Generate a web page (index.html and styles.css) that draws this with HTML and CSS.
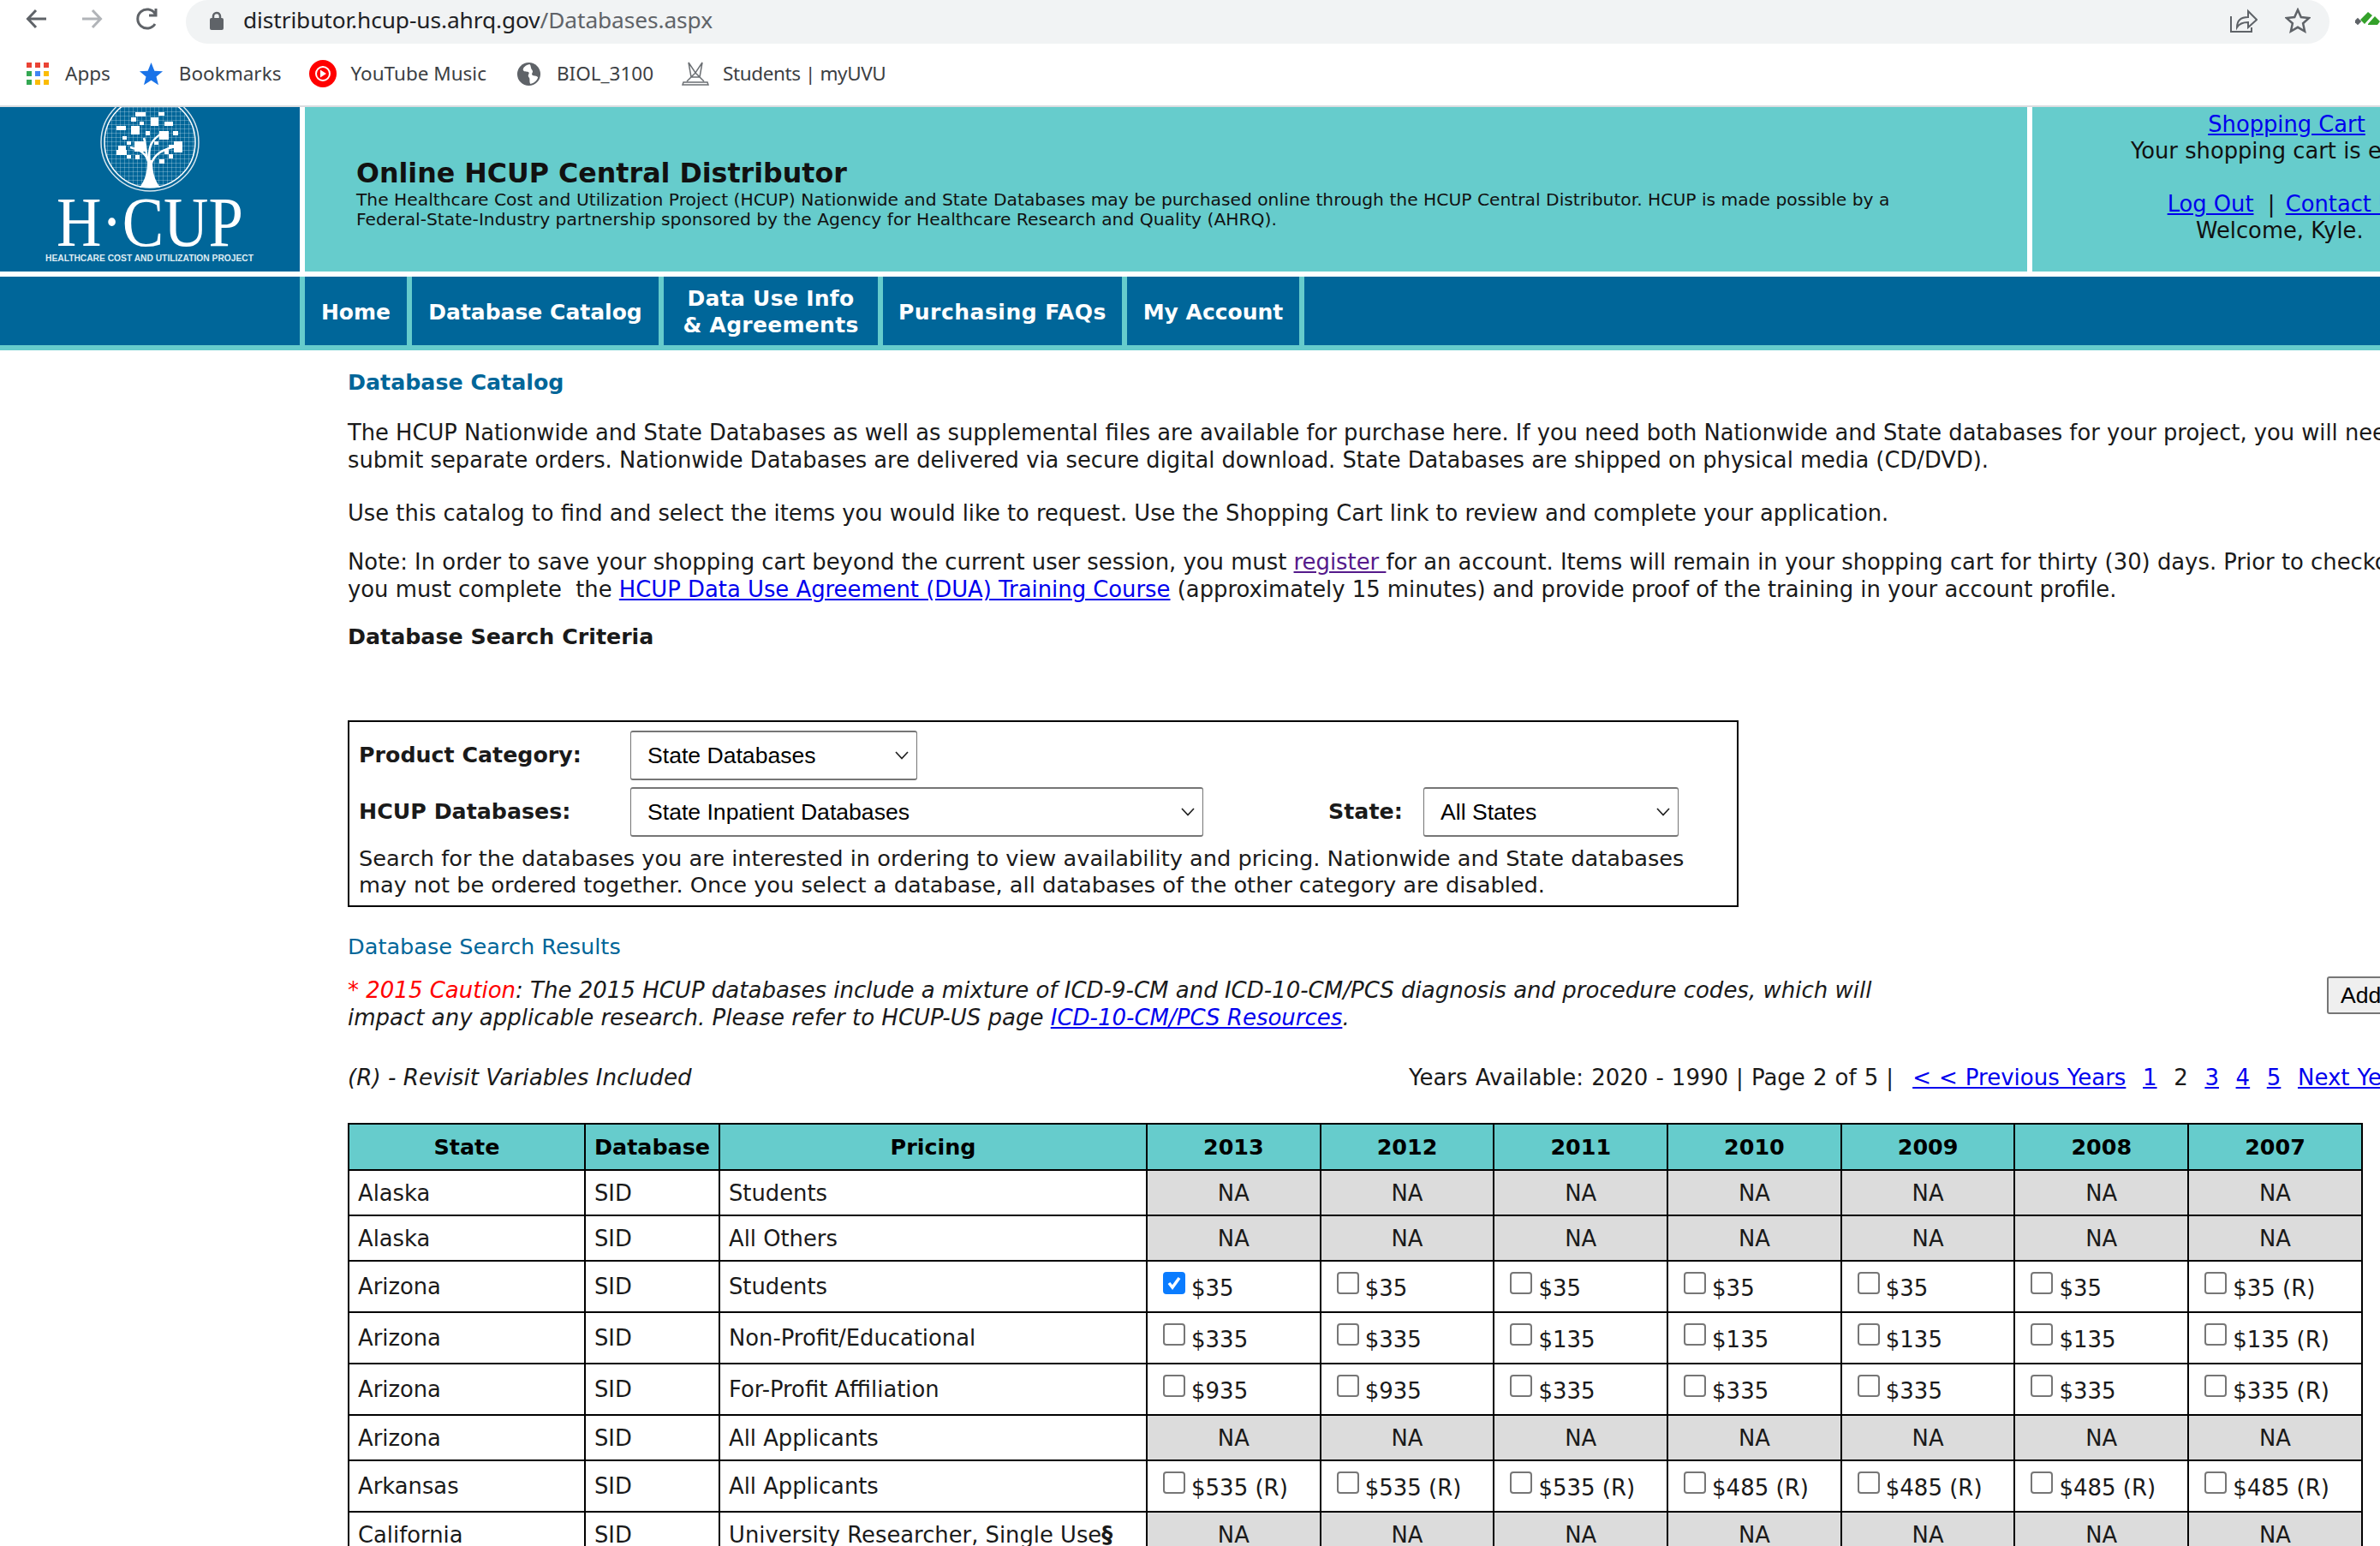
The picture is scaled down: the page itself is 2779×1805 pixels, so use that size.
FILE: index.html
```html
<!DOCTYPE html>
<html lang="en">
<head>
<meta charset="utf-8">
<title>Online HCUP Central Distributor</title>
<link rel="stylesheet" href="styles.css">
</head>
<body>
<div class="chrome">
  <div class="toolbar">
    <div class="navbtns">
      <svg class="ic back" viewBox="0 0 26 26"><path d="M24 13H3M12 3 2.500 13 12 23" /></svg>
      <svg class="ic fwd" viewBox="0 0 26 26"><path d="M2 13h21M14 3l9.500 10L14 23" /></svg>
      <svg class="ic reload" viewBox="0 0 28 26"><path d="M23 19a11 11 0 1 1 0-12M24 1v8h-8" /></svg>
    </div>
    <div class="omnibox">
      <svg class="lock" viewBox="0 0 18 22"><path d="M5 9V6a4 4 0 0 1 8 0v3" class="shackle"/><rect x="1" y="8" width="16" height="14" rx="2"/></svg>
      <span class="url">distributor.hcup-us.ahrq.gov<span class="path">/Databases.aspx</span></span>
      <svg class="share" viewBox="0 0 32 30"><path d="M1 10v18h24v-5M8 23c0-8 5-12 13-12V4l10 10-10 9v-6c-6 0-10 1-13 6z"/></svg>
      <svg class="star" viewBox="0 0 30 30"><path d="m15 2.500 3.800 8.600 9.200 1-6.900 6.200 2 9.200-8.100-4.700-8.100 4.700 2-9.200L2 12.100l9.200-1z"/></svg>
    </div>
    <svg class="ext" viewBox="0 0 29 18"><rect x="0" y="9" width="6" height="6" transform="rotate(45 3 12)" fill="#5f6368"/><path d="m6 10 9-9 5 4-9 10zM15 15l8-9 6 6-3 4H15z" fill="#34a12a"/></svg>
  </div>
  <div class="bookmarks">
    <a class="bm bm-apps">
      <svg class="bmi" viewBox="0 0 26 26"><g fill="#ea4335"><rect x="0" y="0" width="6" height="6"/><rect x="10" y="0" width="6" height="6"/><rect x="20" y="0" width="6" height="6"/></g><rect x="0" y="10" width="6" height="6" fill="#34a853"/><rect x="10" y="10" width="6" height="6" fill="#4285f4"/><rect x="20" y="10" width="6" height="6" fill="#fbbc04"/><rect x="0" y="20" width="6" height="6" fill="#34a853"/><rect x="10" y="20" width="6" height="6" fill="#fbbc04"/><rect x="20" y="20" width="6" height="6" fill="#fbbc04"/></svg>
      Apps</a>
    <a class="bm bm-marks">
      <svg class="bmi wide" viewBox="0 0 30 30"><path d="m15 1 4 10 10 .6-7.800 6.500 2.600 10L15 22.500 6.200 28.100l2.600-10L1 11.600 11 11z" fill="#1a73e8"/></svg>
      Bookmarks</a>
    <a class="bm bm-yt">
      <svg class="bmi yt" viewBox="0 0 32 32"><circle cx="16" cy="16" r="16" fill="#f00"/><circle cx="16" cy="16" r="8" fill="none" stroke="#fff" stroke-width="2"/><path d="m13 11.500 7 4.500-7 4.500z" fill="#fff"/></svg>
      YouTube Music</a>
    <a class="bm bm-biol">
      <svg class="bmi wide" viewBox="0 0 30 30"><circle cx="15" cy="15" r="14" fill="#5f6368"/><path d="M16 3c-5 1-8 4-8 7 2 3 5 1 7 3 1 2-2 3 0 6 2 2 0 5 2 8 4-1 8-4 9-8-2-3-5-1-7-3-1-3 2-3 0-6-2-2-1-5-3-7z" fill="#fff"/></svg>
      BIOL_3100</a>
    <a class="bm bm-stu">
      <svg class="bmi yt" viewBox="0 0 32 28"><g fill="none" stroke="#6b6f73" stroke-width="1.500"><path d="M8 1l8 12 8-12-3 17H11zM16 13l-10 10M16 13l10 10"/><path d="M2 24h28l1 3H1z"/></g></svg>
      Students | myUVU</a>
  </div>
</div>

<header class="banner">
  <div class="logo">
    <svg viewBox="0 0 350 192" width="350" height="192">
      <defs>
        <pattern id="mesh" width="5" height="5" patternUnits="userSpaceOnUse">
          <path d="M5 0H0V5" fill="none" stroke="#fff" stroke-opacity=".5" stroke-width="1"/>
        </pattern>
      </defs>
      <circle cx="175" cy="41" r="57" fill="none" stroke="#d7e6ee" stroke-width="1.500"/>
      <circle cx="175" cy="41" r="53" fill="url(#mesh)" stroke="#fff" stroke-width="1.500"/>
      <path d="M163 94C170 84 172 76 172 62h6c0 14 2 22 9 32z" fill="#fff"/>
      <g fill="none" stroke="#fff" stroke-width="2.500">
        <path d="M174 68c-2-14-10-18-22-21M175 66c-3-18 1-28 15-36M176 68c4-14 14-18 28-22M172 60c-2-10-2-18-4-24"/>
      </g>
      <g fill="#fff">
        <rect x="136" y="22" width="11" height="5"/><rect x="153" y="22" width="10" height="10"/>
        <rect x="158" y="6" width="12" height="5"/><rect x="153" y="12" width="6" height="5"/>
        <rect x="163" y="17" width="5" height="4"/><rect x="176" y="12" width="9" height="10"/>
        <rect x="185" y="6" width="7" height="4"/><rect x="192" y="17" width="10" height="5"/>
        <rect x="186" y="28" width="11" height="10"/><rect x="170" y="28" width="5" height="5"/>
        <rect x="202" y="28" width="6" height="5"/><rect x="143" y="34" width="5" height="4"/>
        <rect x="148" y="40" width="5" height="4"/><rect x="138" y="45" width="9" height="5"/>
        <rect x="157" y="40" width="13" height="12"/><rect x="136" y="50" width="12" height="6"/>
        <rect x="148" y="56" width="5" height="4"/><rect x="158" y="56" width="5" height="5"/>
        <rect x="180" y="40" width="5" height="4"/><rect x="203" y="40" width="10" height="13"/>
        <rect x="197" y="44" width="6" height="4"/><rect x="192" y="50" width="5" height="5"/>
        <rect x="197" y="55" width="5" height="5"/><rect x="186" y="61" width="6" height="5"/>
      </g>
      <text class="lg-main" x="66" y="162" textLength="218" lengthAdjust="spacingAndGlyphs">H·CUP</text>
      <text class="lg-sub" x="53" y="180" textLength="243" lengthAdjust="spacingAndGlyphs">HEALTHCARE COST AND UTILIZATION PROJECT</text>
    </svg>
  </div>
  <div class="intro">
    <h1>Online HCUP Central Distributor</h1>
    <p>The Healthcare Cost and Utilization Project (HCUP) Nationwide and State Databases may be purchased online through the HCUP Central Distributor. HCUP is made possible by a<br>Federal-State-Industry partnership sponsored by the Agency for Healthcare Research and Quality (AHRQ).</p>
  </div>
  <div class="account">
    <a href="#">Shopping Cart</a><br>
    Your shopping cart is empty.<br>
    <br>
    <a href="#">Log Out</a> &nbsp;|&nbsp;<a class="contact" href="#">Contact Us</a><br>
    Welcome, Kyle.&nbsp;&nbsp;
  </div>
</header>

<nav class="mainnav">
  <a class="item i-home">Home</a>
  <a class="item i-cat">Database Catalog</a>
  <a class="item i-dua">Data Use Info<br>&amp; Agreements</a>
  <a class="item i-faq">Purchasing FAQs</a>
  <a class="item i-acc">My Account</a>
</nav>

<main class="content">
  <h2 class="blue-h">Database Catalog</h2>
  <p class="p1">The HCUP Nationwide and State Databases as well as supplemental files are available for purchase here. If you need both Nationwide and State databases for your project, you will need to<br>submit separate orders. Nationwide Databases are delivered via secure digital download. State Databases are shipped on physical media (CD/DVD).</p>
  <p class="p2">Use this catalog to find and select the items you would like to request. Use the Shopping Cart link to review and complete your application.</p>
  <p class="p3">Note: In order to save your shopping cart beyond the current user session, you must <a class="visited" href="#">register </a>for an account. Items will remain in your shopping cart for thirty (30) days. Prior to checkout,<br>you must complete &nbsp;the <a href="#">HCUP Data Use Agreement (DUA) Training Course</a> (approximately 15 minutes) and provide proof of the training in your account profile.</p>
  <h3 class="crit">Database Search Criteria</h3>

  <section class="searchbox">
    <div class="srow">
      <label class="slabel">Product Category:</label>
      <select class="sel sel-cat"><option>State Databases</option></select>
    </div>
    <div class="srow r2">
      <label class="slabel">HCUP Databases:</label>
      <select class="sel sel-db"><option>State Inpatient Databases</option></select>
      <label class="slabel state">State:</label>
      <select class="sel sel-st"><option>All States</option></select>
    </div>
    <p class="shelp">Search for the databases you are interested in ordering to view availability and pricing. Nationwide and State databases<br>may not be ordered together. Once you select a database, all databases of the other category are disabled.</p>
  </section>

  <h4 class="results">Database Search Results</h4>

  <div class="caution-row">
    <p class="caution"><span class="red">* 2015 Caution</span>: The 2015 HCUP databases include a mixture of ICD-9-CM and ICD-10-CM/PCS diagnosis and procedure codes, which will<br>impact any applicable research. Please refer to HCUP-US page <a href="#">ICD-10-CM/PCS Resources</a>.</p>
    <button class="addbtn">Add to Cart</button>
  </div>

  <div class="pager">
    <em class="revisit">(R) - Revisit Variables Included</em>
    <span class="pages">Years Available: 2020 - 1990 | Page 2 of 5 | &nbsp;<a class="pg-first" href="#">&lt; &lt; Previous Years</a> &nbsp;<a href="#">1</a> &nbsp;<span class="cur">2</span> &nbsp;<a href="#">3</a> &nbsp;<a href="#">4</a> &nbsp;<a href="#">5</a> &nbsp;<a href="#">Next Years &gt; &gt;</a></span>
  </div>

  <table class="grid">
    <colgroup><col class="c-state"><col class="c-db"><col class="c-price"><col class="c-y"><col class="c-y"><col class="c-y"><col class="c-y"><col class="c-y"><col class="c-y"><col class="c-y"></colgroup>
    <thead>
      <tr><th>State</th><th>Database</th><th>Pricing</th><th>2013</th><th>2012</th><th>2011</th><th>2010</th><th>2009</th><th>2008</th><th>2007</th></tr>
    </thead>
    <tbody>
      <tr class="na"><td>Alaska</td><td>SID</td><td>Students</td><td class="n">NA</td><td class="n">NA</td><td class="n">NA</td><td class="n">NA</td><td class="n">NA</td><td class="n">NA</td><td class="n">NA</td></tr>
      <tr class="na"><td>Alaska</td><td>SID</td><td>All Others</td><td class="n">NA</td><td class="n">NA</td><td class="n">NA</td><td class="n">NA</td><td class="n">NA</td><td class="n">NA</td><td class="n">NA</td></tr>
      <tr class="buy"><td>Arizona</td><td>SID</td><td>Students</td><td><input type="checkbox" checked><span class="pr">$35</span></td><td><input type="checkbox"><span class="pr">$35</span></td><td><input type="checkbox"><span class="pr">$35</span></td><td><input type="checkbox"><span class="pr">$35</span></td><td><input type="checkbox"><span class="pr">$35</span></td><td><input type="checkbox"><span class="pr">$35</span></td><td><input type="checkbox"><span class="pr">$35 (R)</span></td></tr>
      <tr class="buy"><td>Arizona</td><td>SID</td><td>Non-Profit/Educational</td><td><input type="checkbox"><span class="pr">$335</span></td><td><input type="checkbox"><span class="pr">$335</span></td><td><input type="checkbox"><span class="pr">$135</span></td><td><input type="checkbox"><span class="pr">$135</span></td><td><input type="checkbox"><span class="pr">$135</span></td><td><input type="checkbox"><span class="pr">$135</span></td><td><input type="checkbox"><span class="pr">$135 (R)</span></td></tr>
      <tr class="buy"><td>Arizona</td><td>SID</td><td>For-Profit Affiliation</td><td><input type="checkbox"><span class="pr">$935</span></td><td><input type="checkbox"><span class="pr">$935</span></td><td><input type="checkbox"><span class="pr">$335</span></td><td><input type="checkbox"><span class="pr">$335</span></td><td><input type="checkbox"><span class="pr">$335</span></td><td><input type="checkbox"><span class="pr">$335</span></td><td><input type="checkbox"><span class="pr">$335 (R)</span></td></tr>
      <tr class="na"><td>Arizona</td><td>SID</td><td>All Applicants</td><td class="n">NA</td><td class="n">NA</td><td class="n">NA</td><td class="n">NA</td><td class="n">NA</td><td class="n">NA</td><td class="n">NA</td></tr>
      <tr class="buy"><td>Arkansas</td><td>SID</td><td>All Applicants</td><td><input type="checkbox"><span class="pr">$535 (R)</span></td><td><input type="checkbox"><span class="pr">$535 (R)</span></td><td><input type="checkbox"><span class="pr">$535 (R)</span></td><td><input type="checkbox"><span class="pr">$485 (R)</span></td><td><input type="checkbox"><span class="pr">$485 (R)</span></td><td><input type="checkbox"><span class="pr">$485 (R)</span></td><td><input type="checkbox"><span class="pr">$485 (R)</span></td></tr>
      <tr class="na"><td>California</td><td>SID</td><td>University Researcher, Single Use<b>§</b></td><td class="n">NA</td><td class="n">NA</td><td class="n">NA</td><td class="n">NA</td><td class="n">NA</td><td class="n">NA</td><td class="n">NA</td></tr>
    </tbody>
  </table>
</main>
</body>
</html>
```

FILE: styles.css
```css
* { box-sizing: border-box; }
html, body { margin: 0; padding: 0; height: 1805px; overflow: hidden; background: #fff; }
body { font-family: "DejaVu Sans", Verdana, sans-serif; font-size: 25.750px; line-height: 32px; color: #1a1a1a; }
a { color: #0000ee; text-decoration: underline; }
a.visited { color: #551a8b; }

/* browser chrome */
.chrome { height: 125px; border-bottom: 2px solid #dadce0; font-family: "Noto Sans", "Open Sans", sans-serif; color: #3c4043; }
.toolbar { height: 51px; display: flex; align-items: flex-start; position: relative; }
.navbtns { width: 217px; height: 44px; display: flex; align-items: center; padding-left: 30px; }
.ic { fill: none; stroke-width: 3; height: 26px; }
.back { width: 26px; stroke: #5f6368; }
.fwd { width: 26px; stroke: #b1b4b8; margin-left: 38px; }
.reload { width: 28px; stroke: #5f6368; margin-left: 38px; }
.omnibox { width: 2503px; height: 51px; background: #f1f3f4; border-radius: 26px; display: flex; align-items: center; padding-left: 27px; }
.lock { width: 18px; height: 22px; fill: #5f6368; margin-top: -4px; }
.shackle { fill: none; stroke: #5f6368; stroke-width: 2.500; }
.url { font-size: 26.300px; line-height: 44px; margin: -6px 0 0 22px; color: #202124; letter-spacing: -.1px; white-space: nowrap; }
.path { color: #5f6368; }
.share { width: 32px; height: 30px; fill: none; stroke: #5f6368; stroke-width: 2; margin-left: auto; margin-top: -4px; }
.star { width: 30px; height: 30px; fill: none; stroke: #5f6368; stroke-width: 2.500; margin: -4px 22px 0 32px; }
.ext { width: 29px; height: 18px; margin: 13px 0 0 30px; flex: none; }
.bookmarks { height: 72px; display: flex; align-items: center; padding: 0 0 2px 31px; font-size: 22.500px; line-height: 32px; white-space: nowrap; }
.bm { display: flex; align-items: center; color: #3c4043; text-decoration: none; }
.bmi { width: 26px; height: 26px; margin-right: 19px; flex: none; }
.bmi.wide { width: 29px; height: 29px; margin-right: 18px; }
.bmi.yt { width: 32px; height: 32px; margin-right: 16px; }
.bm-marks { margin-left: 33px; }
.bm-yt { margin-left: 33px; }
.bm-biol { margin-left: 35px; }
.bm-stu { margin-left: 33px; letter-spacing: -.4px; }

/* header */
.banner { height: 192px; display: flex; white-space: nowrap; }
.logo { width: 350px; flex: none; background: #006699; overflow: hidden; }
.logo svg { display: block; }
.lg-main { font-family: "Liberation Serif", serif; font-size: 82px; fill: #fff; }
.lg-sub { font-family: "Liberation Sans", sans-serif; font-size: 10px; font-weight: 700; fill: #dfecf3; }
.intro { width: 2011px; flex: none; margin-left: 6px; background: #66cccc; padding: 59px 0 0 60px; color: #111; }
.intro h1 { margin: 0; font-size: 31.700px; line-height: 36px; font-weight: 700; }
.intro p { margin: 2px 0 0; font-size: 20.250px; line-height: 23px; }
.account { width: 594px; flex: none; margin-left: 6px; background: #66cccc; text-align: center; line-height: 31px; padding-top: 5px; color: #111; }
.contact { margin-left: 4px; }

/* nav */
.mainnav { margin-top: 6px; height: 86px; background: #006699; border-bottom: 6px solid #66cccc; display: flex; padding-left: 350px; }
.item { border-left: 6px solid #66cccc; color: #fff; text-decoration: none; font-weight: 700; font-size: 25px; line-height: 31px; text-align: center; display: flex; align-items: center; justify-content: center; white-space: nowrap; flex: none; padding-top: 2px; }
.i-home { width: 125px; }
.i-cat { width: 294px; }
.i-dua { width: 256px; letter-spacing: .3px; }
.i-faq { width: 285px; letter-spacing: .5px; }
.i-acc { width: 213px; border-right: 6px solid #66cccc; }

/* content */
.content { padding-left: 406px; white-space: nowrap; }
.content p, .content h2, .content h3, .content h4 { margin: 0; }
.blue-h { margin-top: 22px !important; font-size: 25.300px; color: #006699; font-weight: 700; }
.p1 { margin-top: 26px !important; }
.p2 { margin-top: 30px !important; }
.p3 { margin-top: 25px !important; font-size: 25.850px; }
.crit { margin-top: 24px !important; font-size: 25.300px; font-weight: 700; }

.searchbox { margin-top: 81px; width: 1624px; height: 218px; border: 2px solid #000; padding: 10px 10px 0 11px; }
.srow { height: 58px; display: flex; align-items: center; }
.r2 { margin-top: 8px; }
.slabel { width: 317px; font-weight: 700; font-size: 25.300px; flex: none; }
.slabel.state { width: 111px; margin-left: 146px; }
.sel { appearance: none; height: 58px; font-family: "Liberation Sans", Arial, sans-serif; font-size: 26.600px; color: #000; background: #fff url("data:image/svg+xml,%3Csvg xmlns='http://www.w3.org/2000/svg' width='16' height='10' viewBox='0 0 16 10'%3E%3Cpath d='M1 1l7 7.500L15 1' fill='none' stroke='%23222' stroke-width='1.700'/%3E%3C/svg%3E") no-repeat right 9px center; border-style: solid; border-color: #767676; border-width: 2px 1px; border-radius: 3px; padding: 0 30px 0 19px; flex: none; }
.sel-cat { width: 335px; }
.sel-db { width: 669px; }
.sel-st { width: 298px; }
.shelp { margin-top: 10px !important; font-size: 25.650px; line-height: 31px; }

.results { margin-top: 30px !important; font-size: 25.600px; font-weight: 400; color: #006699; }
.caution-row { margin-top: 19px; display: flex; align-items: flex-start; font-size: 26px; }
.caution { width: 2311px; flex: none; font-style: italic; }
.red { color: #f00; }
.addbtn { height: 44px; flex: none; font-family: "Liberation Sans", Arial, sans-serif; font-size: 26.600px; color: #000; background: #efefef; border: 2px solid #767676; border-radius: 3px; padding: 0 14px; }
.pager { margin-top: 38px; display: flex; font-size: 26px; }
.revisit { width: 1239px; flex: none; font-size: 26.200px; }
.pages { word-spacing: .8px; }
.pages a, .cur { margin-left: 1.500px; }
.pages .pg-first { margin-left: 4px; }

.grid { margin-top: 37px; border-collapse: collapse; table-layout: fixed; width: 2350px; }
.c-state { width: 276px; }
.c-db { width: 157px; }
.c-price { width: 499px; }
.c-y { width: 202.700px; }
.grid th, .grid td { border: 2px solid #000; padding: 0 10px; }
.grid th { height: 54px; background: #66cccc; font-weight: 700; font-size: 25.400px; color: #000; padding: 0 4px; text-align: center; }
.na td { height: 53px; }
.buy td { height: 60px; }
.grid td { font-size: 25.800px; }
.grid td.n { background: #dcdcdc; text-align: center; }
.grid input { appearance: none; width: 26px; height: 26px; margin: 0 7px 0 8px; vertical-align: 0; background: #fff; border: 2px solid #767676; border-radius: 4px; }
.grid input:checked { border-color: #0a7cff; background: #0a7cff url("data:image/svg+xml,%3Csvg xmlns='http://www.w3.org/2000/svg' viewBox='0 0 22 22'%3E%3Cpath d='M5 11l4 5 8-11' fill='none' stroke='%23fff' stroke-width='3.500'/%3E%3C/svg%3E") center / 100% no-repeat; }
.pr { font-size: 26px; vertical-align: -2px; }
```
